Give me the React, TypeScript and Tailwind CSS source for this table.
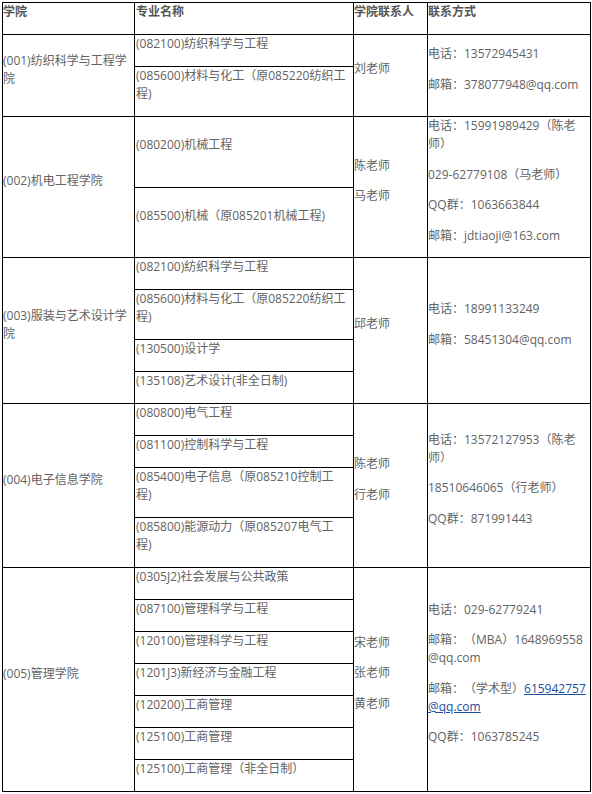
import React from 'react'

type Group = {
  college: string[];
  majors: string[][];
  persons: string[];
  contacts: React.ReactNode[][];
}

const Link = ({ children }: { children: React.ReactNode }) => (
  <a href="#" className="text-[#1a4f9c] underline">{children}</a>
)

const groups: Group[] = [
  {
    college: ['(001)纺织科学与工程学', '院'],
    majors: [['(082100)纺织科学与工程'], ['(085600)材料与化工（原085220纺织工', '程)']],
    persons: ['刘老师'],
    contacts: [['电话：13572945431'], ['邮箱：378077948@qq.com']],
  },
  {
    college: ['(002)机电工程学院'],
    majors: [['(080200)机械工程'], ['(085500)机械（原085201机械工程)']],
    persons: ['陈老师', '马老师'],
    contacts: [
      ['电话：15991989429（陈老', '师）'],
      ['029-62779108（马老师）'],
      ['QQ群：1063663844'],
      ['邮箱：jdtiaoji@163.com'],
    ],
  },
  {
    college: ['(003)服装与艺术设计学', '院'],
    majors: [
      ['(082100)纺织科学与工程'],
      ['(085600)材料与化工（原085220纺织工', '程)'],
      ['(130500)设计学'],
      ['(135108)艺术设计(非全日制)'],
    ],
    persons: ['邱老师'],
    contacts: [['电话：18991133249'], ['邮箱：58451304@qq.com']],
  },
  {
    college: ['(004)电子信息学院'],
    majors: [
      ['(080800)电气工程'],
      ['(081100)控制科学与工程'],
      ['(085400)电子信息（原085210控制工', '程)'],
      ['(085800)能源动力（原085207电气工', '程)'],
    ],
    persons: ['陈老师', '行老师'],
    contacts: [
      ['电话：13572127953（陈老', '师）'],
      ['18510646065（行老师）'],
      ['QQ群：871991443'],
    ],
  },
  {
    college: ['(005)管理学院'],
    majors: [
      ['(0305J2)社会发展与公共政策'],
      ['(087100)管理科学与工程'],
      ['(120100)管理科学与工程'],
      ['(1201J3)新经济与金融工程'],
      ['(120200)工商管理'],
      ['(125100)工商管理'],
      ['(125100)工商管理（非全日制）'],
    ],
    persons: ['宋老师', '张老师', '黄老师'],
    contacts: [
      ['电话：029-62779241'],
      ['邮箱：（MBA）1648969558', '@qq.com'],
      [
        <>邮箱：（学术型）<Link>615942757</Link></>,
        <Link>@qq.com</Link>,
      ],
      ['QQ群：1063785245'],
    ],
  },
]

const Lines = ({ lines, gap }: { lines: React.ReactNode[]; gap: string }) => (
  <p className={gap}>
    {lines.map((l, i) => (
      <span key={i} className="block whitespace-nowrap">{l}</span>
    ))}
  </p>
)

const cell = 'border border-black p-0 align-middle'

export default function App() {
  return (
    <div
      className="bg-white pl-[2px] pt-[2px] text-[12px] leading-[18px] text-[#636363] [text-spacing-trim:space-all]"
      style={{ fontFamily: '"Open Sans", "Noto Sans CJK SC", sans-serif' }}
    >
      <table className="table-fixed border-collapse w-[588px]">
        <colgroup>
          <col className="w-[132px]" />
          <col className="w-[219px]" />
          <col className="w-[74px]" />
          <col className="w-[163px]" />
        </colgroup>
        <thead>
          <tr className="text-left font-bold text-[#555]">
            <th className={cell + ' align-top'}><p className="mb-[13px]">学院</p></th>
            <th className={cell + ' align-top pl-px'}><p className="mb-[13px]">专业名称</p></th>
            <th className={cell + ' align-top'}><p className="mb-[13px]">学院联系人</p></th>
            <th className={cell + ' align-top'}><p className="mb-[13px]">联系方式</p></th>
          </tr>
        </thead>
        <tbody>
          {groups.map((g, gi) =>
            g.majors.map((m, mi) => (
              <tr key={gi + '-' + mi}>
                {mi === 0 && (
                  <td rowSpan={g.majors.length} className={cell}>
                    <Lines lines={g.college} gap="mb-[12px]" />
                  </td>
                )}
                <td className={cell + ' pl-px'}>
                  <Lines lines={m} gap="mb-[13px]" />
                </td>
                {mi === 0 && (
                  <td rowSpan={g.majors.length} className={cell}>
                    {g.persons.map((p, i) => (
                      <Lines key={i} lines={[p]} gap="mb-[12.5px]" />
                    ))}
                  </td>
                )}
                {mi === 0 && (
                  <td rowSpan={g.majors.length} className={cell}>
                    {g.contacts.map((c, i) => (
                      <Lines key={i} lines={c} gap="mb-[12.5px]" />
                    ))}
                  </td>
                )}
              </tr>
            ))
          )}
        </tbody>
      </table>
    </div>
  )
}
